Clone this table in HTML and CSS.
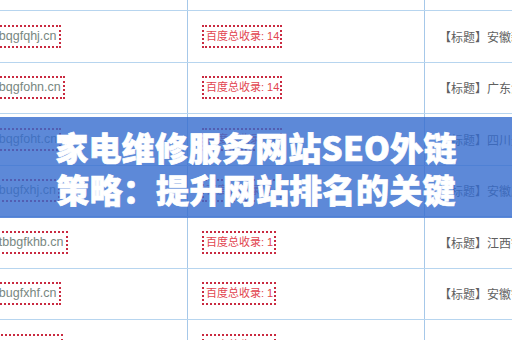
FILE: index.html
```html
<!DOCTYPE html>
<html lang="zh-CN">
<head>
<meta charset="utf-8">
<title>家电维修服务网站SEO外链策略</title>
<link rel="stylesheet" href="styles.css">
</head>
<body>
<div class="page">
  <div class="table">
    <div class="row">
      <div class="cell c1"><span class="domain">www.bqgfkhd.cn</span></div>
      <div class="cell c2"><span class="count">百度总收录: 14</span></div>
      <div class="cell c3"><span class="title">【标题】安徽新闻网站优化</span></div>
    </div>
    <div class="row">
      <div class="cell c1"><span class="domain">www.bqgfqhj.cn</span></div>
      <div class="cell c2"><span class="count">百度总收录: 14</span></div>
      <div class="cell c3"><span class="title">【标题】安徽新闻网站优化</span></div>
    </div>
    <div class="row">
      <div class="cell c1"><span class="domain">www.bqgfohn.cn</span></div>
      <div class="cell c2"><span class="count">百度总收录: 14</span></div>
      <div class="cell c3"><span class="title">【标题】广东汽车维修</span></div>
    </div>
    <div class="row">
      <div class="cell c1"><span class="domain">www.bqgfoht.cn</span></div>
      <div class="cell c2"><span class="count">百度总收录: 14</span></div>
      <div class="cell c3"><span class="title">【标题】四川天府家电</span></div>
    </div>
    <div class="row">
      <div class="cell c1"><span class="domain">www.bugfxhj.cn</span></div>
      <div class="cell c2"><span class="count">百度总收录: 14</span></div>
      <div class="cell c3"><span class="title">【标题】安徽服务中心</span></div>
    </div>
    <div class="row">
      <div class="cell c1"><span class="domain">www.tbbgfkhb.cn</span></div>
      <div class="cell c2"><span class="count">百度总收录: 1</span></div>
      <div class="cell c3"><span class="title">【标题】江西钳工技术</span></div>
    </div>
    <div class="row">
      <div class="cell c1"><span class="domain">www.bugfxhf.cn</span></div>
      <div class="cell c2"><span class="count">百度总收录: 1</span></div>
      <div class="cell c3"><span class="title">【标题】安徽钳工技术</span></div>
    </div>
    <div class="row">
      <div class="cell c1"><span class="domain">www.bugfxkd.cn</span></div>
      <div class="cell c2"><span class="count">百度总收录: 1</span></div>
      <div class="cell c3"><span class="title">【标题】安徽钳工技术</span></div>
    </div>
  </div>
  <div class="banner">
    <p class="headline">家电维修服务网站SEO外链<br>策略：提升网站排名的关键</p>
  </div>
</div>
</body>
</html>
```

FILE: styles.css
```css
html, body {
  margin: 0;
  padding: 0;
  background: #ffffff;
}

.page {
  position: relative;
  width: 512px;
  height: 340px;
  overflow: hidden;
  background: #ffffff;
  font-family: "Liberation Sans", "Noto Sans CJK SC", sans-serif;
}

.table {
  margin-top: -40.5px;
}

.row {
  display: grid;
  grid-template-columns: 188px 237px 200px;
  height: 51.5px;
  box-sizing: border-box;
  border-bottom: 1px solid #b7d5ef;
}

.cell {
  display: flex;
  align-items: center;
  overflow: hidden;
  box-sizing: border-box;
  border-right: 1px solid #a6c8e9;
  padding-left: 14px;
  white-space: nowrap;
}

.c1 {
  padding-left: 0;
}

.domain {
  margin-left: -35px;
  padding: 0 2px;
  border: 2px dotted #c92a40;
  font-size: 12.5px;
  line-height: 19px;
  color: #788781;
}

.count {
  padding: 0 1px 0 2px;
  border: 2px dotted #c92a40;
  font-size: 11px;
  line-height: 19px;
  color: #e2454f;
}

.title {
  font-size: 12px;
  color: #5f5f5f;
  font-family: "Noto Sans CJK SC", sans-serif;
}

.banner {
  position: absolute;
  left: 0;
  right: 0;
  top: 117px;
  height: 101px;
  display: flex;
  align-items: center;
  justify-content: center;
  background: rgba(52, 107, 206, 0.8);
}

.headline {
  margin: 0;
  color: #ffffff;
  font-family: "Noto Sans CJK SC", sans-serif;
  font-weight: 900;
  font-size: 33px;
  line-height: 42px;
  letter-spacing: 0.3px;
  text-align: center;
  -webkit-text-stroke: 0.7px #ffffff;
}
```
